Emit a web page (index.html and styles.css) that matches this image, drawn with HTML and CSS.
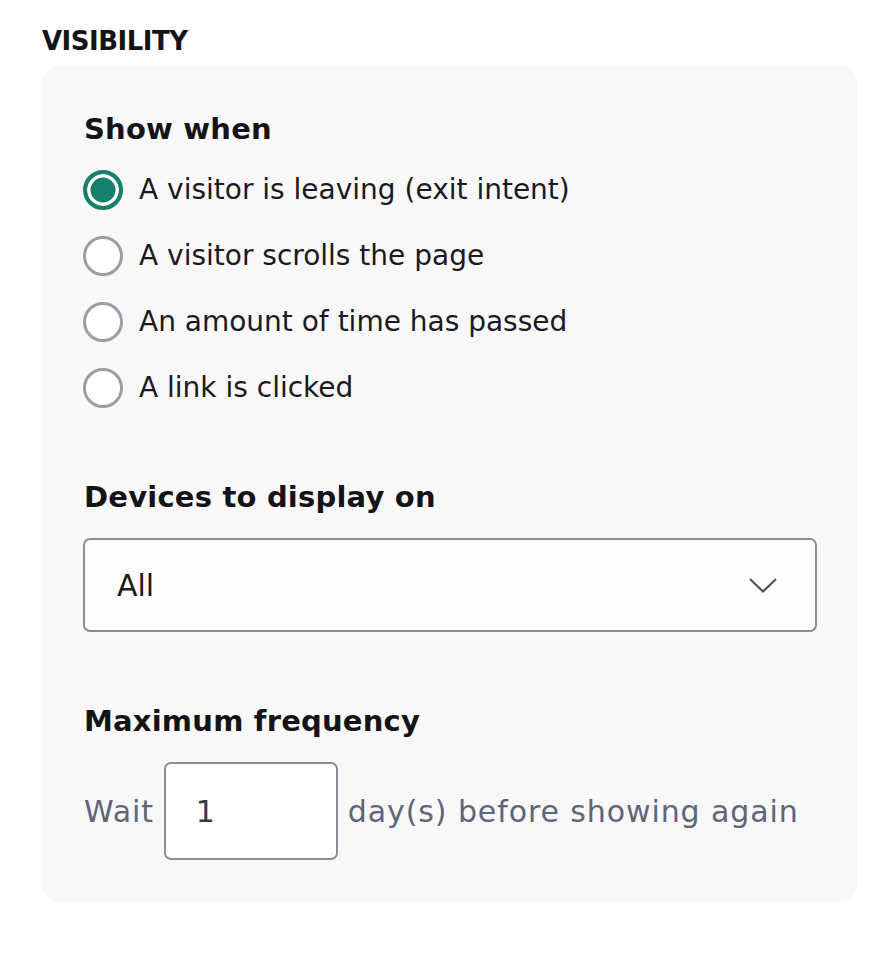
FILE: index.html
```html
<!DOCTYPE html>
<html>
<head>
<meta charset="utf-8">
<link rel="stylesheet" href="styles.css">
</head>
<body>
<div class="page">
  <h2 class="section-title">VISIBILITY</h2>
  <div class="card">
    <div class="group">
      <h3 class="group-title">Show when</h3>
      <div class="radios">
        <label class="radio-row"><span class="radio checked"></span><span class="radio-label">A visitor is leaving (exit intent)</span></label>
        <label class="radio-row"><span class="radio"></span><span class="radio-label">A visitor scrolls the page</span></label>
        <label class="radio-row"><span class="radio"></span><span class="radio-label">An amount of time has passed</span></label>
        <label class="radio-row"><span class="radio"></span><span class="radio-label">A link is clicked</span></label>
      </div>
    </div>
    <div class="group devices">
      <h3 class="group-title">Devices to display on</h3>
      <div class="select">
        <span class="select-value">All</span>
        <svg class="chevron" width="28" height="15" viewBox="0 0 28 15"><path d="M1 1 L14 13.5 L27 1" fill="none" stroke="#4e4c58" stroke-width="2"/></svg>
      </div>
    </div>
    <div class="group freq">
      <h3 class="group-title">Maximum frequency</h3>
      <div class="freq-row">
        <span class="muted">Wait</span>
        <div class="num-input">1</div>
        <span class="muted">day(s) before showing again</span>
      </div>
    </div>
  </div>
</div>
</body>
</html>
```
FILE: styles.css
```css
html, body {
  margin: 0;
  padding: 0;
  background: #ffffff;
}
body {
  font-family: "DejaVu Sans", "Noto Sans", sans-serif;
  color: #1a1a1f;
}
.page {
  padding: 27px 35px 0 42px;
}
.section-title {
  margin: 0;
  font-size: 26px;
  font-weight: 600;
  line-height: 28px;
  letter-spacing: -0.5px;
  color: #141418;
}
.card {
  margin-top: 11px;
  background: #f8f8f8;
  border-radius: 16px;
  padding: 46px 40px 41px 42px;
}
.group-title {
  margin: 0;
  font-size: 29px;
  font-weight: 600;
  line-height: 34px;
  letter-spacing: 0.2px;
  color: #141418;
}
.radios {
  margin-top: 24px;
  display: flex;
  flex-direction: column;
  gap: 26px;
}
.radio-row {
  display: flex;
  align-items: center;
  gap: 16px;
  height: 40px;
  margin-left: -1px;
}
.radio {
  box-sizing: border-box;
  width: 40px;
  height: 40px;
  border-radius: 50%;
  border: 3px solid #9e9cab;
  background: #ffffff;
  flex: none;
}
.radio.checked {
  border: 4px solid #17806a;
  background: #17806a;
  box-shadow: inset 0 0 0 3.5px #ffffff;
}
.radio-label {
  font-size: 28px;
  line-height: 40px;
  letter-spacing: 0;
  color: #1a1a1f;
}
.devices {
  margin-top: 72px;
}
.select {
  margin-top: 24px;
  box-sizing: border-box;
  height: 94px;
  margin-left: -1px;
  border: 2px solid #8e8c9c;
  border-radius: 7px;
  background: #fdfdfd;
  display: flex;
  align-items: center;
  justify-content: space-between;
  padding: 0 38px 0 32px;
}
.select-value {
  font-size: 30px;
  color: #1a1a1f;
}
.chevron {
  display: block;
}
.freq {
  margin-top: 72px;
}
.freq-row {
  margin-top: 24px;
  display: flex;
  align-items: center;
  gap: 10px;
}
.muted {
  font-size: 30px;
  color: #5d667a;
  letter-spacing: 0.9px;
}
.num-input {
  box-sizing: border-box;
  width: 174px;
  height: 98px;
  border: 2px solid #8e8c9c;
  border-radius: 7px;
  background: #ffffff;
  display: flex;
  align-items: center;
  padding-left: 30px;
  font-size: 30px;
  color: #3a3845;
}
```
